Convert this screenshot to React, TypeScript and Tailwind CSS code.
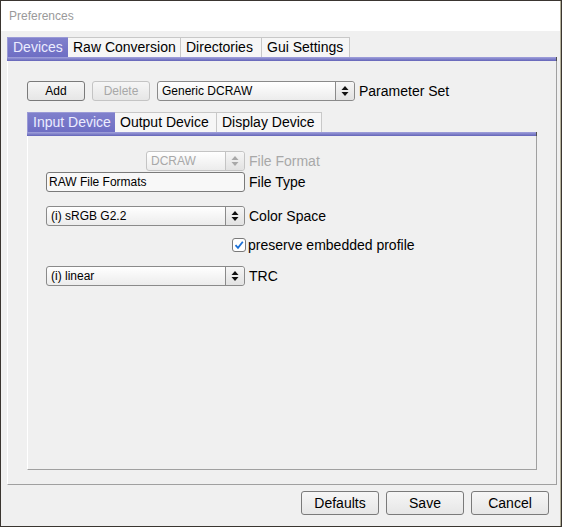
import React from 'react'

const font = "font-['Liberation_Sans',Arial,sans-serif]"

function Arrows({ disabled }: { disabled?: boolean }) {
  return (
    <svg width="8" height="12" viewBox="0 0 8 12">
      <polygon points="0.5,5 4,1 7.5,5" fill={disabled ? '#a8a8a8' : '#111'} />
      <polygon points="0.5,7 4,11 7.5,7" fill={disabled ? '#a8a8a8' : '#111'} />
    </svg>
  )
}

function Combo({
  value,
  width,
  disabled,
}: {
  value: string
  width: string
  disabled?: boolean
}) {
  return (
    <div
      className={`${width} h-[20px] flex rounded-[3px] border ${
        disabled ? 'border-[#c4c4c4]' : 'border-[#8a8a8a]'
      } bg-gradient-to-b from-[#ffffff] to-[#ececec]`}
    >
      <div
        className={`flex-1 flex items-center pl-[4px] text-[12px] ${
          disabled ? 'text-[#a8a8a8]' : 'text-black'
        }`}
      >
        {value}
      </div>
      <div
        className={`w-[19px] flex items-center justify-center border-l ${
          disabled ? 'border-[#c4c4c4]' : 'border-[#8a8a8a]'
        } rounded-r-[3px] bg-gradient-to-b from-[#f6f6f6] to-[#e2e2e2]`}
      >
        <Arrows disabled={disabled} />
      </div>
    </div>
  )
}

function Button({
  label,
  width,
  disabled,
}: {
  label: string
  width: string
  disabled?: boolean
}) {
  return (
    <div
      className={`${width} flex items-center justify-center rounded-[3px] border ${
        disabled
          ? 'border-[#c4c4c4] text-[#a8a8a8]'
          : 'border-[#7a7a7a] text-black'
      } bg-gradient-to-b from-[#f6f6f6] to-[#e6e6e6]`}
    >
      {label}
    </div>
  )
}

function Tabs({
  tabs,
  height,
}: {
  tabs: { label: string; width: string }[]
  height: string
}) {
  return (
    <div>
      <div className={`flex ${height}`}>
        {tabs.map((t, i) =>
          i === 0 ? (
            <div
              key={t.label}
              className={`${t.width} flex items-center pl-[5px] text-[14px] text-[#ececff] bg-gradient-to-b from-[#8080cc] to-[#6e6ec4] border-t border-l border-[#9a9ad6]`}
            >
              {t.label}
            </div>
          ) : (
            <div
              key={t.label}
              className={`${t.width} flex items-center pl-[5px] text-[14px] text-black bg-[#f6f6f6] border-t border-r border-[#c8c8c8]`}
            >
              {t.label}
            </div>
          )
        )}
      </div>
      <div className="h-[4px] bg-gradient-to-b from-[#a2a2dc] to-[#6464b8] border-r border-[#505050]" />
    </div>
  )
}

function Row({ children }: { children: React.ReactNode }) {
  return <div className="h-[20px] flex items-center gap-[4px] leading-none">{children}</div>
}

export default function App() {
  return (
    <div className={`w-[562px] h-[527px] bg-[#3a3530] pt-px pl-px ${font}`}>
      <div className="w-[560px] h-[525px] flex flex-col border-r border-[#b4b09a] bg-[#f0f0f0]">
        <div className="h-[30px] bg-white flex items-center pl-[8px] text-[12px] text-[#9a9a9a]">
          Preferences
        </div>

        <div className="flex-1 flex flex-col pt-[6px] pl-[6px] pr-[3px]">
          <Tabs
            height="h-[20px]"
            tabs={[
              { label: 'Devices', width: 'w-[61px]' },
              { label: 'Raw Conversion', width: 'w-[113px]' },
              { label: 'Directories', width: 'w-[81px]' },
              { label: 'Gui Settings', width: 'w-[88px]' },
            ]}
          />

          <div className="h-[424px] flex flex-col border-l border-white border-r border-b border-r-[#a0a0a0] border-b-[#a0a0a0] pl-[19px] pr-[19px] pt-[20px] pb-[14px]">
            <div className="flex items-center h-[20px] text-[12px] leading-none">
              <Button label="Add" width="w-[58px] h-[20px]" />
              <div className="w-[7px]" />
              <Button label="Delete" width="w-[58px] h-[20px]" disabled />
              <div className="w-[7px]" />
              <Combo value="Generic DCRAW" width="w-[198px]" />
              <span className="ml-[4px] text-[14px] text-black">Parameter Set</span>
            </div>

            <div className="mt-[11px]">
              <Tabs
                height="h-[20px]"
                tabs={[
                  { label: 'Input Device', width: 'w-[88px]' },
                  { label: 'Output Device', width: 'w-[102px]' },
                  { label: 'Display Device', width: 'w-[105px]' },
                ]}
              />
            </div>

            <div className="flex-1 flex flex-col border-l border-white border-r border-b border-r-[#a0a0a0] border-b-[#a0a0a0] pl-[18px] pt-[15px]">
              <Row>
                <div className="w-[96px]" />
                <Combo value="DCRAW" width="w-[99px]" disabled />
                <span className="text-[14px] text-[#a8a8a8]">File Format</span>
              </Row>
              <div className="mt-px">
                <Row>
                  <div className="w-[199px] h-[20px] flex items-center pl-[2px] rounded-[3px] border border-[#7a7a7a] bg-[#f8f8f8] text-[12px] text-black">
                    RAW File Formats
                  </div>
                  <span className="text-[14px] text-black">File Type</span>
                </Row>
              </div>
              <div className="mt-[14px]">
                <Row>
                  <Combo value="(i) sRGB G2.2" width="w-[199px]" />
                  <span className="text-[14px] text-black">Color Space</span>
                </Row>
              </div>
              <div className="mt-[12px] h-[14px] flex items-center leading-none">
                <div className="w-[186px]" />
                <div className="w-[14px] h-[14px] flex items-center justify-center rounded-[3px] border border-[#7a7a7a] bg-white">
                  <svg width="10" height="10" viewBox="0 0 10 10">
                    <path
                      d="M1.5 5.2 L4 7.8 L8.8 1.8"
                      stroke="#1a6fd6"
                      strokeWidth="1.8"
                      fill="none"
                    />
                  </svg>
                </div>
                <span className="ml-[2px] text-[14px] text-black">preserve embedded profile</span>
              </div>
              <div className="mt-[14px]">
                <Row>
                  <Combo value="(i) linear" width="w-[199px]" />
                  <span className="text-[14px] text-black">TRC</span>
                </Row>
              </div>
            </div>
          </div>

          <div className="mt-[6px] flex justify-end gap-[7px] pr-[8px] text-[14px]">
            <Button label="Defaults" width="w-[78px] h-[24px]" />
            <Button label="Save" width="w-[78px] h-[24px]" />
            <Button label="Cancel" width="w-[78px] h-[24px]" />
          </div>
        </div>
      </div>
    </div>
  )
}
